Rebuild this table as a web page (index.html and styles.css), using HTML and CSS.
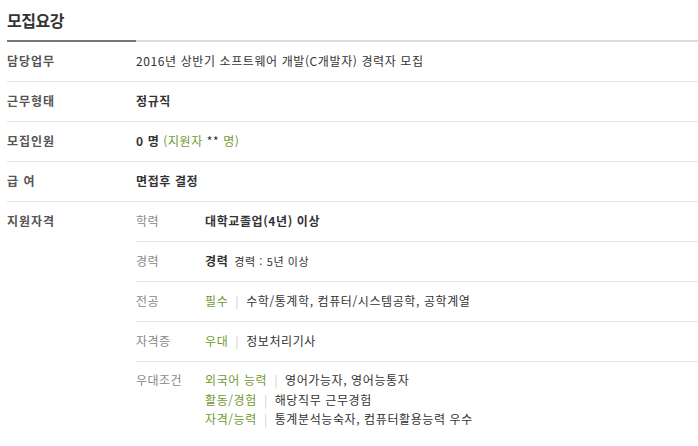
FILE: index.html
```html
<!DOCTYPE html>
<html lang="ko">
<head>
<meta charset="utf-8">
<link rel="stylesheet" href="styles.css">
</head>
<body>
<div class="wrap">
  <h2 class="title">모집요강</h2>
  <div class="table">
    <div class="row">
      <div class="th">담당업무</div>
      <div class="td">2016년 상반기 소프트웨어 개발(C개발자) 경력자 모집</div>
    </div>
    <div class="row">
      <div class="th">근무형태</div>
      <div class="td"><b>정규직</b></div>
    </div>
    <div class="row">
      <div class="th">모집인원</div>
      <div class="td"><b>0 명</b> <span class="green">(지원자 <span class="dark">**</span> 명)</span></div>
    </div>
    <div class="row">
      <div class="th">급 여</div>
      <div class="td"><b>면접후 결정</b></div>
    </div>
    <div class="row last">
      <div class="th">지원자격</div>
      <div class="sub">
        <div class="subrow">
          <div class="sth">학력</div>
          <div class="std"><b>대학교졸업(4년) 이상</b></div>
        </div>
        <div class="subrow">
          <div class="sth">경력</div>
          <div class="std"><b>경력</b> <span class="small">경력 : 5년 이상</span></div>
        </div>
        <div class="subrow">
          <div class="sth">전공</div>
          <div class="std"><span class="green">필수</span><span class="bar">|</span>수학/통계학, 컴퓨터/시스템공학, 공학계열</div>
        </div>
        <div class="subrow">
          <div class="sth">자격증</div>
          <div class="std"><span class="green">우대</span><span class="bar">|</span>정보처리기사</div>
        </div>
        <div class="subrow multi">
          <div class="sth">우대조건</div>
          <div class="std">
            <div><span class="green">외국어 능력</span><span class="bar">|</span>영어가능자, 영어능통자</div>
            <div><span class="green">활동/경험</span><span class="bar">|</span>해당직무 근무경험</div>
            <div><span class="green">자격/능력</span><span class="bar">|</span>통계분석능숙자, 컴퓨터활용능력 우수</div>
          </div>
        </div>
      </div>
    </div>
  </div>
</div>
</body>
</html>
```

FILE: styles.css
```css
html, body {
  margin: 0;
  padding: 0;
  background: #fff;
}
body {
  font-family: "Noto Sans CJK KR", "Noto Sans", sans-serif;
  font-size: 12px;
  color: #333;
}
.wrap {
  padding-left: 7px;
}
.title {
  margin: 0;
  height: 40px;
  line-height: 40px;
  font-size: 16px;
  font-weight: bold;
  color: #333;
  letter-spacing: -0.5px;
}
.table {
  border-top: 2px solid #ddd;
  position: relative;
}
.table::before {
  content: "";
  position: absolute;
  left: 0;
  top: -2px;
  width: 129px;
  height: 2px;
  background: #777;
}
.row {
  display: flex;
  border-bottom: 1px solid #e3e3e3;
}
.row.last {
  border-bottom: none;
}
.th {
  width: 129px;
  flex: none;
  height: 39px;
  line-height: 37px;
  color: #555;
  font-weight: bold;
  letter-spacing: 1px;
}
.td {
  flex: 1;
  height: 39px;
  line-height: 37px;
  color: #333;
  letter-spacing: 0.6px;
}
.td b, .std b {
  color: #333;
  font-weight: bold;
}
.green {
  color: #72992e;
}
.dark {
  color: #333;
}
.sub {
  flex: 1;
}
.subrow {
  display: flex;
  border-bottom: 1px solid #e3e3e3;
}
.subrow:last-child {
  border-bottom: none;
}
.sth {
  width: 69px;
  flex: none;
  height: 39px;
  line-height: 37px;
  color: #888;
  letter-spacing: 0.5px;
}
.std {
  flex: 1;
  height: 39px;
  line-height: 37px;
  letter-spacing: 0.6px;
}
.small {
  font-size: 11px;
  margin-left: 2px;
}
.bar {
  color: #ccc;
  margin: 0 7px;
}
.multi .sth {
  padding-top: 8px;
  height: auto;
  line-height: 20px;
}
.multi .std {
  height: auto;
  padding-top: 8px;
  line-height: 19.5px;
}
```
